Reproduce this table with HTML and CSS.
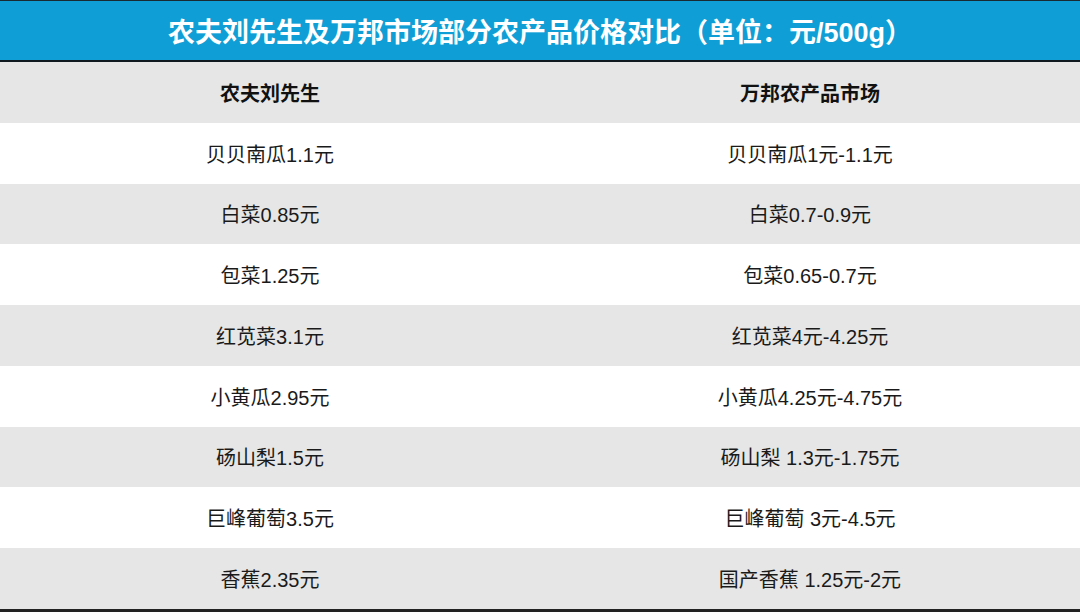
FILE: index.html
```html
<!DOCTYPE html>
<html lang="zh-CN">
<head>
<meta charset="utf-8">
<title>农夫刘先生及万邦市场部分农产品价格对比</title>
<link rel="stylesheet" href="styles.css">
</head>
<body>
<div class="table">
  <div class="title">农夫刘先生及万邦市场部分农产品价格对比（单位：元/500g）</div>
  <div class="row head"><div class="cell">农夫刘先生</div><div class="cell">万邦农产品市场</div></div>
  <div class="row"><div class="cell">贝贝南瓜1.1元</div><div class="cell">贝贝南瓜1元-1.1元</div></div>
  <div class="row alt"><div class="cell">白菜0.85元</div><div class="cell">白菜0.7-0.9元</div></div>
  <div class="row"><div class="cell">包菜1.25元</div><div class="cell">包菜0.65-0.7元</div></div>
  <div class="row alt"><div class="cell">红苋菜3.1元</div><div class="cell">红苋菜4元-4.25元</div></div>
  <div class="row"><div class="cell">小黄瓜2.95元</div><div class="cell">小黄瓜4.25元-4.75元</div></div>
  <div class="row alt"><div class="cell">砀山梨1.5元</div><div class="cell">砀山梨 1.3元-1.75元</div></div>
  <div class="row"><div class="cell">巨峰葡萄3.5元</div><div class="cell">巨峰葡萄 3元-4.5元</div></div>
  <div class="row alt"><div class="cell">香蕉2.35元</div><div class="cell">国产香蕉 1.25元-2元</div></div>
</div>
</body>
</html>
```

FILE: styles.css
```css
html, body {
  margin: 0;
  padding: 0;
  background: #ffffff;
}
body {
  width: 1080px;
  height: 613px;
  overflow: hidden;
  font-family: "Liberation Sans", "Noto Sans CJK SC", sans-serif;
}
.table {
  display: flex;
  flex-direction: column;
  border-top: 1px solid #1a2a33;
  border-bottom: 3px solid #222222;
}
.title {
  height: 59px;
  background: #0f9ed5;
  color: #ffffff;
  font-weight: bold;
  font-size: 27px;
  display: flex;
  align-items: center;
  justify-content: center;
  border-bottom: 2px solid #101820;
  padding-bottom: 1px;
  box-sizing: content-box;
  height: 58px;
}
.row {
  display: grid;
  grid-template-columns: 1fr 1fr;
  height: 60.75px;
  background: #ffffff;
}
.row.head, .row.alt {
  background: #e6e6e6;
}
.cell {
  display: flex;
  align-items: center;
  justify-content: center;
  font-size: 20px;
  color: #1a1a1a;
}
.head .cell {
  font-weight: bold;
  color: #111111;
}
```
